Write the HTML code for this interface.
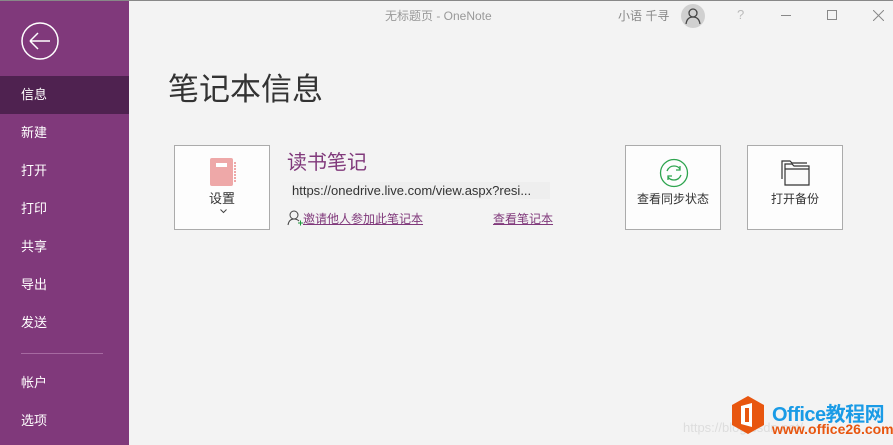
<!DOCTYPE html>
<html><head><meta charset="utf-8"><style>
*{margin:0;padding:0;box-sizing:border-box}
body{width:893px;height:445px;overflow:hidden;background:#f3f3f3;font-family:"Liberation Sans","Noto Sans CJK SC",sans-serif;position:relative}
.side{position:absolute;left:0;top:0;width:129px;height:445px;background:#80397b}
.top{position:absolute;left:0;top:0;width:893px;height:1px;background:#888}
.item{position:absolute;left:0;width:129px;height:38px;line-height:38px;padding-left:21px;color:#fff;font-size:13px}
.sel{background:#4f2250}
.abs{position:absolute}
.card{position:absolute;background:#fdfdfd;border:1px solid #ababab;top:145px;height:85px}
.lbl{position:absolute;width:100%;text-align:center;font-size:12px;color:#333}
a{color:#80397b;text-decoration:underline}
</style></head><body>
<div class="side">
<svg class="abs" style="left:20px;top:21px" width="40" height="40"><circle cx="20" cy="20" r="18" fill="none" stroke="#fff" stroke-width="1.5"/><path d="M10 20H30M10 20L18 12M10 20L18 28" stroke="#fff" stroke-width="1.5" fill="none"/></svg>
<div class="item sel" style="top:76px">信息</div>
<div class="item" style="top:114px">新建</div>
<div class="item" style="top:152px">打开</div>
<div class="item" style="top:190px">打印</div>
<div class="item" style="top:228px">共享</div>
<div class="item" style="top:266px">导出</div>
<div class="item" style="top:304px">发送</div>
<div class="abs" style="left:21px;top:353px;width:82px;height:1px;background:#a66aa1"></div>
<div class="item" style="top:364px">帐户</div>
<div class="item" style="top:402px">选项</div>
</div>
<div class="top"></div>
<div class="abs" style="left:385px;top:7px;font-size:12px;color:#999">无标题页 - OneNote</div>
<div class="abs" style="left:618px;top:7px;font-size:12px;color:#888">小语 千寻</div>
<svg class="abs" style="left:681px;top:4px" width="24" height="24"><circle cx="12" cy="12" r="12" fill="#d0d0d0"/><circle cx="12" cy="9" r="4" fill="none" stroke="#444" stroke-width="1.3"/><path d="M5 20Q6 13 12 13Q18 13 19 20" fill="none" stroke="#444" stroke-width="1.3"/></svg>
<div class="abs" style="left:737px;top:7px;font-size:13px;color:#bbb">?</div>
<div class="abs" style="left:781px;top:15px;width:10px;height:1px;background:#888"></div>
<div class="abs" style="left:827px;top:10px;width:10px;height:10px;border:1px solid #888"></div>
<svg class="abs" style="left:873px;top:10px" width="11" height="11"><path d="M0 0L11 11M11 0L0 11" stroke="#888"/></svg>
<div class="abs" style="left:168px;top:64px;font-size:31px;color:#333">笔记本信息</div>
<div class="card" style="left:174px;width:96px">
<svg class="abs" style="left:35px;top:12px" width="26" height="28"><rect x="0" y="0" width="23" height="28" rx="2" fill="#eea8a8"/><rect x="6" y="5" width="11" height="4" fill="#fff"/><path d="M25 4V24" stroke="#eea8a8" stroke-width="2" stroke-dasharray="2 1"/></svg>
<div class="lbl" style="top:42px;font-size:13px">设置</div>
<svg class="abs" style="left:45px;top:63px" width="7" height="5"><path d="M0.5 0.5L3.5 3.5L6.5 0.5" fill="none" stroke="#444"/></svg>
</div>
<div class="abs" style="left:287px;top:146px;font-size:20px;color:#80397b">读书笔记</div>
<div class="abs" style="left:292px;top:182px;width:258px;height:17px;background:#eee;font-size:13px;color:#333;line-height:17px">https://onedrive.live.com/view.aspx?resi...</div>
<svg class="abs" style="left:287px;top:209px" width="16" height="17"><circle cx="7" cy="6" r="4" fill="none" stroke="#444"/><path d="M1 16Q2 10 7 10Q10 10 12 12" fill="none" stroke="#444"/><path d="M11 14H16M13.5 11.5V16.5" stroke="#1f9a3c"/></svg>
<div class="abs" style="left:303px;top:210px;font-size:12px"><a>邀请他人参加此笔记本</a></div>
<div class="abs" style="left:493px;top:210px;font-size:12px"><a>查看笔记本</a></div>
<div class="card" style="left:625px;width:96px">
<svg class="abs" style="left:33px;top:12px" width="30" height="30"><circle cx="15" cy="15" r="13.5" fill="none" stroke="#2ea44f" stroke-width="1.3"/><path d="M8 13Q10 8 15 8Q19 8 21 11M22 17Q20 22 15 22Q11 22 9 19" fill="none" stroke="#2ea44f" stroke-width="1.3"/><path d="M21 8V12H17M9 22V18H13" fill="none" stroke="#2ea44f" stroke-width="1.3"/></svg>
<div class="lbl" style="top:44px">查看同步状态</div>
</div>
<div class="card" style="left:747px;width:96px">
<svg class="abs" style="left:33px;top:13px" width="30" height="28"><path d="M1 20V2H9L11 4H26" fill="none" stroke="#333" stroke-width="1.2"/><path d="M4 26V5H11L13 7H28V26Z" fill="#fafafa" stroke="#333" stroke-width="1.2"/><path d="M4 10H28" stroke="#333" stroke-width="1.2"/></svg>
<div class="lbl" style="top:44px">打开备份</div>
</div>
<div class="abs" style="left:683px;top:420px;font-size:13px;color:#ddd">https://blog.csdn.net/...</div>
<svg class="abs" style="left:730px;top:395px" width="36" height="40"><path d="M18 1L34 10V30L18 39L2 30V10Z" fill="#e8560f"/><path d="M11 11L22 8V32L11 29Z" fill="#fff"/><rect x="15" y="13" width="4" height="14" fill="#e8560f"/></svg>
<div class="abs" style="left:772px;top:398px;font-size:20px;font-weight:bold;color:#1a9be6;letter-spacing:-0.5px">Office教程网</div>
<div class="abs" style="left:772px;top:421px;font-size:14px;font-weight:bold;color:#e8560f">www.office26.com</div>
</body></html>
